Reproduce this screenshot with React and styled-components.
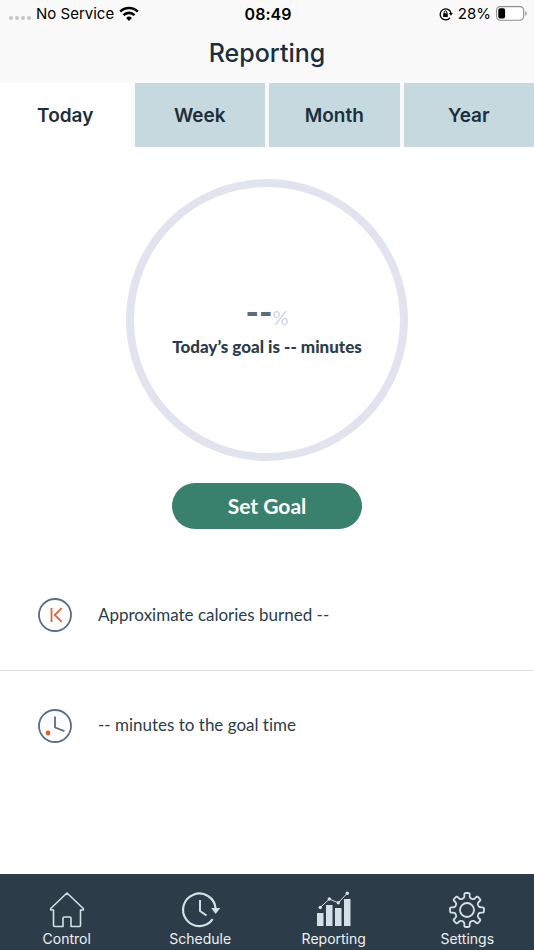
import React, { useState } from "react";
import styled, { createGlobalStyle } from "styled-components";

const tabs = ["Today", "Week", "Month", "Year"];

// outline of a cog with eight rounded teeth, centred on 0,0
const gearPath = () => {
  const points = [];
  for (let i = 0; i < 8; i++) {
    [
      [-16, 12.2],
      [-11, 13.6],
      [-9, 17.2],
      [9, 17.2],
      [11, 13.6],
      [16, 12.2],
    ].forEach(([offset, radius]) => {
      const angle = ((i * 45 - 90 + offset) * Math.PI) / 180;
      points.push([radius * Math.cos(angle), radius * Math.sin(angle)]);
    });
  }
  const between = (a, b, t) =>
    `${(a[0] + (b[0] - a[0]) * t).toFixed(2)} ${(a[1] + (b[1] - a[1]) * t).toFixed(2)}`;
  const corners = points.map((point, i) => {
    const previous = points[(i + points.length - 1) % points.length];
    const next = points[(i + 1) % points.length];
    return `${between(point, previous, 0.35)}Q${between(point, point, 0)} ${between(point, next, 0.35)}`;
  });
  return `M${corners.join("L")}Z`;
};

const WifiIcon = () => (
  <svg width="20" height="16" viewBox="0 0 20 16" fill="none" stroke="#000" strokeWidth="2.6" aria-hidden="true">
    <path d="M1.2 5.6a12.6 12.6 0 0 1 17.6 0" />
    <path d="M4.5 9.1a7.9 7.9 0 0 1 11 0" />
    <path d="M10 15l-2.9-3a4.1 4.1 0 0 1 5.8 0z" fill="#000" stroke="none" />
  </svg>
);

const RotationLockIcon = () => (
  <svg width="14" height="14" viewBox="0 0 14 14" fill="none" stroke="#000" aria-hidden="true">
    <path d="M11 10.8A5.5 5.5 0 1 1 12 6" strokeWidth="1.3" />
    <path d="M9.9 6h4l-2 2.8z" fill="#000" stroke="none" />
    <rect x="4.2" y="6.2" width="4.6" height="3.8" rx="0.5" fill="#000" stroke="none" />
    <path d="M5.2 6.5V5.3a1.3 1.3 0 0 1 2.6 0v1.2" strokeWidth="1" />
  </svg>
);

const BatteryIcon = () => (
  <svg width="31" height="15" viewBox="0 0 31 15" aria-hidden="true">
    <rect x="0.6" y="0.6" width="27" height="13.6" rx="3.6" fill="#fff" stroke="#8e8e8e" strokeWidth="1.1" />
    <rect x="2.3" y="2.3" width="6.8" height="10.2" rx="1.8" fill="#000" />
    <path d="M29.3 5v5c1.8-.8 1.8-4.2 0-5z" fill="#8e8e8e" />
  </svg>
);

const CaloriesIcon = () => (
  <svg width="34" height="34" viewBox="0 0 34 34" fill="none" aria-hidden="true">
    <circle cx="17" cy="17" r="16" stroke="#596d83" strokeWidth="1.8" />
    <path d="M13.5 10v14M23.700 10.200l-7 6.800 7 6.800" stroke="#e0633c" strokeWidth="1.8" />
  </svg>
);

const TimeIcon = () => (
  <svg width="34" height="34" viewBox="0 0 34 34" fill="none" aria-hidden="true">
    <circle cx="17" cy="17" r="16" stroke="#596d83" strokeWidth="1.8" />
    <path d="M17 7.5v11l9.500 3.600" stroke="#596d83" strokeWidth="1.8" />
    <circle cx="10" cy="24" r="2.4" fill="#e95a2b" />
  </svg>
);

const HomeIcon = () => (
  <svg width="38" height="38" viewBox="0 0 38 38" fill="none" stroke="#d3e1e6" strokeWidth="1.6" strokeLinejoin="round" aria-hidden="true">
    <path d="M19 2L35.3 17.500V19H32.500V34.300Q32.500 35.500 31.300 35.500H23V27.200Q23 26 21.800 26H16.200Q15 26 15 27.200V35.500H6.700Q5.500 35.500 5.500 34.300V19H2.700V17.500Z" />
  </svg>
);

const ScheduleIcon = () => (
  <svg width="38" height="38" viewBox="0 0 38 38" fill="none" stroke="#d3e1e6" aria-hidden="true">
    <path d="M31.7 28.2A16.3 16.3 0 1 1 34.6 17.5" strokeWidth="2.2" />
    <path d="M30.2 17h9l-4.500 6z" fill="#d3e1e6" stroke="none" />
    <path d="M19 9v11l6.500 4.500" strokeWidth="2" />
  </svg>
);

const ReportingIcon = () => (
  <svg width="38" height="38" viewBox="0 0 38 38" fill="#d3e1e6" aria-hidden="true">
    <path d="M2 22h6.5v13H2zM11 14h6.500v21H11zM20 17h6.500v18H20zM29 8h6.500v27H29z" />
    <path d="M5.300 16.500L14.300 8L23.300 11.800L32.300 2.200" fill="none" stroke="#d3e1e6" strokeWidth="1" />
    <circle cx="5.3" cy="16.5" r="1.7" />
    <circle cx="14.3" cy="8" r="1.7" />
    <circle cx="23.3" cy="11.8" r="1.7" />
    <circle cx="32.3" cy="2.2" r="1.7" />
  </svg>
);

const SettingsIcon = () => (
  <svg width="38" height="38" viewBox="-19 -19 38 38" fill="none" stroke="#d3e1e6" strokeWidth="1.8" strokeLinejoin="round" aria-hidden="true">
    <path d={gearPath()} />
    <circle r="7" />
  </svg>
);

const navItems = [
  { label: "Control", icon: <HomeIcon /> },
  { label: "Schedule", icon: <ScheduleIcon /> },
  { label: "Reporting", icon: <ReportingIcon /> },
  { label: "Settings", icon: <SettingsIcon /> },
];

export default function App() {
  const [activeTab, setActiveTab] = useState("Today");

  return (
    <>
      <GlobalStyle />
      <Screen>
        <Header>
          <StatusBar>
            <StatusSide>
              <Signal>
                <Dot />
                <Dot />
                <Dot />
                <Dot />
              </Signal>
              <span>No Service</span>
              <WifiIcon />
            </StatusSide>
            <Clock>08:49</Clock>
            <StatusSide $end>
              <RotationLockIcon />
              <span>28%</span>
              <BatteryIcon />
            </StatusSide>
          </StatusBar>
          <Title>Reporting</Title>
        </Header>

        <Tabs>
          {tabs.map((tab) => (
            <Tab
              key={tab}
              type="button"
              $active={tab === activeTab}
              onClick={() => setActiveTab(tab)}
            >
              {tab}
            </Tab>
          ))}
        </Tabs>

        <Main>
          <GoalRing>
            <Percent>
              <PercentValue>--</PercentValue>
              <PercentSign>%</PercentSign>
            </Percent>
            <GoalText>Today’s goal is -- minutes</GoalText>
          </GoalRing>
          <GoalButton type="button">Set Goal</GoalButton>
          <Stats>
            <Stat>
              <CaloriesIcon />
              <StatText>Approximate calories burned --</StatText>
            </Stat>
            <Stat>
              <TimeIcon />
              <StatText>-- minutes to the goal time</StatText>
            </Stat>
          </Stats>
        </Main>

        <NavBar>
          {navItems.map((item) => (
            <NavLink key={item.label} href={`#${item.label.toLowerCase()}`}>
              {item.icon}
              {item.label}
            </NavLink>
          ))}
        </NavBar>
      </Screen>
    </>
  );
}

const GlobalStyle = createGlobalStyle`
  * {
    box-sizing: border-box;
  }
  body {
    margin: 0;
    background: #fff;
    font-family: Inter, "Liberation Sans", sans-serif;
    font-variant-ligatures: none;
    color: #1b2f3c;
  }
  svg {
    flex-shrink: 0;
    overflow: visible;
  }
`;

const Screen = styled.div`
  display: flex;
  flex-direction: column;
  min-height: 100vh;
`;

const Header = styled.header`
  background: #f9f9f9;
  padding-bottom: 14px;
`;

const StatusBar = styled.div`
  display: grid;
  grid-template-columns: 1fr auto 1fr;
  align-items: center;
  height: 27px;
  padding: 0 7px 0 9px;
  font-size: 15px;
  color: #000;
`;

const StatusSide = styled.div`
  display: flex;
  align-items: center;
  justify-content: ${(props) => (props.$end ? "flex-end" : "flex-start")};
  gap: 5px;
`;

const Signal = styled.div`
  display: flex;
  gap: 2px;
  padding-top: 8px;
`;

const Dot = styled.span`
  width: 4px;
  height: 4px;
  border-radius: 50%;
  background: #c6c6c6;
`;

const Clock = styled.span`
  font-size: 16px;
  font-weight: 600;
`;

const Title = styled.h1`
  margin: 0;
  padding-top: 10px;
  font-size: 25px;
  font-weight: 500;
  line-height: 32px;
  text-align: center;
`;

const Tabs = styled.nav`
  display: grid;
  grid-template-columns: repeat(4, 1fr);
  gap: 4px;
  background: #f9f9f9;
`;

const Tab = styled.button`
  height: 64px;
  padding: 0;
  border: 0;
  background: ${(props) => (props.$active ? "#fff" : "#c5d9de")};
  color: #1b2f3c;
  font-family: inherit;
  font-size: 19px;
  font-weight: 600;
  cursor: pointer;
`;

const Main = styled.main`
  display: flex;
  flex: 1;
  flex-direction: column;
  align-items: center;
  padding-top: 32px;
`;

const GoalRing = styled.section`
  display: flex;
  flex-direction: column;
  align-items: center;
  width: 282px;
  height: 282px;
  padding-top: 106px;
  border: 8px solid #e1e4ef;
  border-radius: 50%;
`;

const Percent = styled.div`
  display: flex;
  align-items: baseline;
  height: 42px;
  line-height: 36px;
`;

const PercentValue = styled.span`
  color: #5b6b7a;
  font-family: Lato, sans-serif;
  font-size: 36px;
  font-weight: 900;
`;

const PercentSign = styled.span`
  color: #ccd4ea;
  font-family: Lato, sans-serif;
  font-size: 20px;
  font-weight: 400;
`;

const GoalText = styled.p`
  margin: 0;
  color: #2b3d4b;
  font-family: Lato, sans-serif;
  font-size: 17px;
  font-weight: 900;
  line-height: 24px;
`;

const GoalButton = styled.button`
  width: 190px;
  height: 46px;
  margin-top: 22px;
  padding: 0 0 2px;
  border: 0;
  border-radius: 23px;
  background: #3a816d;
  color: #fff;
  font-family: Lato, sans-serif;
  font-size: 21px;
  font-weight: 700;
  cursor: pointer;
`;

const Stats = styled.ul`
  width: 100%;
  margin: 31px 0 0;
  padding: 0;
  list-style: none;
`;

const Stat = styled.li`
  display: flex;
  align-items: center;
  gap: 26px;
  height: 110px;
  padding: 0 38px;

  & + & {
    border-top: 1px solid #e3e3e3;
  }
`;

const StatText = styled.span`
  padding-bottom: 2px;
  color: #2b3d4b;
  font-family: Lato, sans-serif;
  font-size: 17px;
`;

const NavBar = styled.nav`
  display: grid;
  grid-template-columns: repeat(4, 1fr);
  height: 76px;
  background: #2d3c49;
`;

const NavLink = styled.a`
  display: flex;
  flex-direction: column;
  align-items: center;
  padding-top: 17px;
  color: #edf1f3;
  font-size: 14px;
  line-height: 20px;
  text-decoration: none;
`;
